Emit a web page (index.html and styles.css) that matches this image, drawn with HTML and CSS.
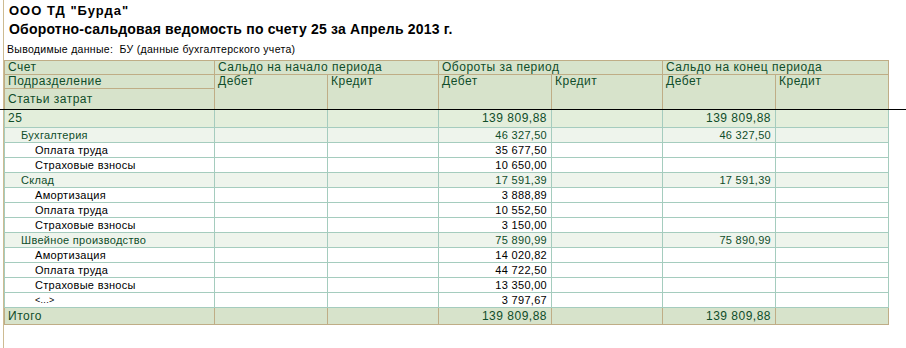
FILE: index.html
```html
<!DOCTYPE html>
<html lang="ru">
<head>
<meta charset="utf-8">
<title>Оборотно-сальдовая ведомость</title>
<link rel="stylesheet" href="styles.css">
</head>
<body>
<div class="page">
  <div class="org">ООО ТД "Бурда"</div>
  <div class="title">Оборотно-сальдовая ведомость по счету 25 за Апрель 2013 г.</div>
  <div class="params">Выводимые данные:&nbsp; БУ (данные бухгалтерского учета)</div>
  <table class="report">
    <colgroup>
      <col class="c-name"><col class="c-sum"><col class="c-sum2"><col class="c-sum"><col class="c-sum2"><col class="c-sum"><col class="c-sum">
    </colgroup>
    <thead>
      <tr class="h1">
        <th>Счет</th>
        <th colspan="2">Сальдо на начало периода</th>
        <th colspan="2">Обороты за период</th>
        <th colspan="2">Сальдо на конец периода</th>
      </tr>
      <tr class="h2">
        <th>Подразделение</th>
        <th rowspan="2">Дебет</th><th rowspan="2">Кредит</th>
        <th rowspan="2">Дебет</th><th rowspan="2">Кредит</th>
        <th rowspan="2">Дебет</th><th rowspan="2">Кредит</th>
      </tr>
      <tr class="h3">
        <th>Статьи затрат</th>
      </tr>
    </thead>
    <tbody>
      <tr class="acc">
        <td>25</td><td></td><td></td><td class="n">139 809,88</td><td></td><td class="n">139 809,88</td><td></td>
      </tr>
      <tr class="grp">
        <td class="l1">Бухгалтерия</td><td></td><td></td><td class="n">46 327,50</td><td></td><td class="n">46 327,50</td><td></td>
      </tr>
      <tr class="item">
        <td class="l2">Оплата труда</td><td></td><td></td><td class="n">35 677,50</td><td></td><td></td><td></td>
      </tr>
      <tr class="item">
        <td class="l2">Страховые взносы</td><td></td><td></td><td class="n">10 650,00</td><td></td><td></td><td></td>
      </tr>
      <tr class="grp">
        <td class="l1">Склад</td><td></td><td></td><td class="n">17 591,39</td><td></td><td class="n">17 591,39</td><td></td>
      </tr>
      <tr class="item">
        <td class="l2">Амортизация</td><td></td><td></td><td class="n">3 888,89</td><td></td><td></td><td></td>
      </tr>
      <tr class="item">
        <td class="l2">Оплата труда</td><td></td><td></td><td class="n">10 552,50</td><td></td><td></td><td></td>
      </tr>
      <tr class="item">
        <td class="l2">Страховые взносы</td><td></td><td></td><td class="n">3 150,00</td><td></td><td></td><td></td>
      </tr>
      <tr class="grp">
        <td class="l1">Швейное производство</td><td></td><td></td><td class="n">75 890,99</td><td></td><td class="n">75 890,99</td><td></td>
      </tr>
      <tr class="item">
        <td class="l2">Амортизация</td><td></td><td></td><td class="n">14 020,82</td><td></td><td></td><td></td>
      </tr>
      <tr class="item">
        <td class="l2">Оплата труда</td><td></td><td></td><td class="n">44 722,50</td><td></td><td></td><td></td>
      </tr>
      <tr class="item">
        <td class="l2">Страховые взносы</td><td></td><td></td><td class="n">13 350,00</td><td></td><td></td><td></td>
      </tr>
      <tr class="item">
        <td class="l2 other">&lt;...&gt;</td><td></td><td></td><td class="n">3 797,67</td><td></td><td></td><td></td>
      </tr>
    </tbody>
    <tfoot>
      <tr class="total">
        <td>Итого</td><td></td><td></td><td class="n">139 809,88</td><td></td><td class="n">139 809,88</td><td></td>
      </tr>
    </tfoot>
  </table>
  <div class="cursor-line"></div>
</div>
</body>
</html>
```

FILE: styles.css
```css
html, body {
  margin: 0;
  padding: 0;
  background: #ffffff;
}

body {
  font-family: "Liberation Sans", Arial, sans-serif;
  color: #000;
}

.page {
  position: relative;
  margin-left: 3px;
  border-left: 1px solid #cdbb92;
  min-height: 348px;
  box-sizing: border-box;
  padding-top: 3px;
}

.org {
  font-size: 13px;
  font-weight: bold;
  letter-spacing: 1px;
  line-height: 16px;
  padding-left: 5px;
}

.title {
  margin-top: 1px;
  font-size: 14px;
  font-weight: bold;
  letter-spacing: 0.2px;
  line-height: 19px;
  padding-left: 5px;
}

.params {
  margin-top: 3px;
  font-size: 10.5px;
  letter-spacing: 0.3px;
  line-height: 14px;
  padding-left: 3px;
  margin-bottom: 4px;
}

.report {
  border-collapse: collapse;
  table-layout: fixed;
  width: 884px;
  color: #0f4d2a;
}

.c-name { width: 210px; }
.c-sum { width: 113px; }
.c-sum2 { width: 111px; }

.report th,
.report td {
  padding: 0 3px;
  font-weight: normal;
  text-align: left;
  vertical-align: top;
  white-space: nowrap;
  overflow: hidden;
}

.report th {
  background: #d7e3cb;
  border: 1px solid #bfad86;
  font-size: 12px;
  letter-spacing: 0.5px;
  line-height: 13px;
}

.report .h3 th {
  line-height: 20px;
}

.report td {
  border: 1px solid #a5ccbe;
  font-size: 11px;
  letter-spacing: 0.3px;
  line-height: 14px;
}

.report td.n {
  text-align: right;
  padding-right: 4px;
}

.report .acc td {
  background: #e3eedb;
  font-size: 12px;
  letter-spacing: 0.5px;
  line-height: 17px;
}

.report .grp td {
  background: #eef4ec;
}

.report .item td {
  background: #ffffff;
  color: #000;
}

.report td.l1 { padding-left: 16px; }
.report td.l2 { padding-left: 30px; }
.report td.other { font-size: 9px; }

.report .total td {
  background: #d7e3cb;
  border: 1px solid #bfad86;
  font-size: 12px;
  letter-spacing: 0.5px;
  line-height: 16px;
}

.cursor-line {
  position: absolute;
  left: -4px;
  top: 109px;
  width: 907px;
  height: 1px;
  background: #000;
}
```
